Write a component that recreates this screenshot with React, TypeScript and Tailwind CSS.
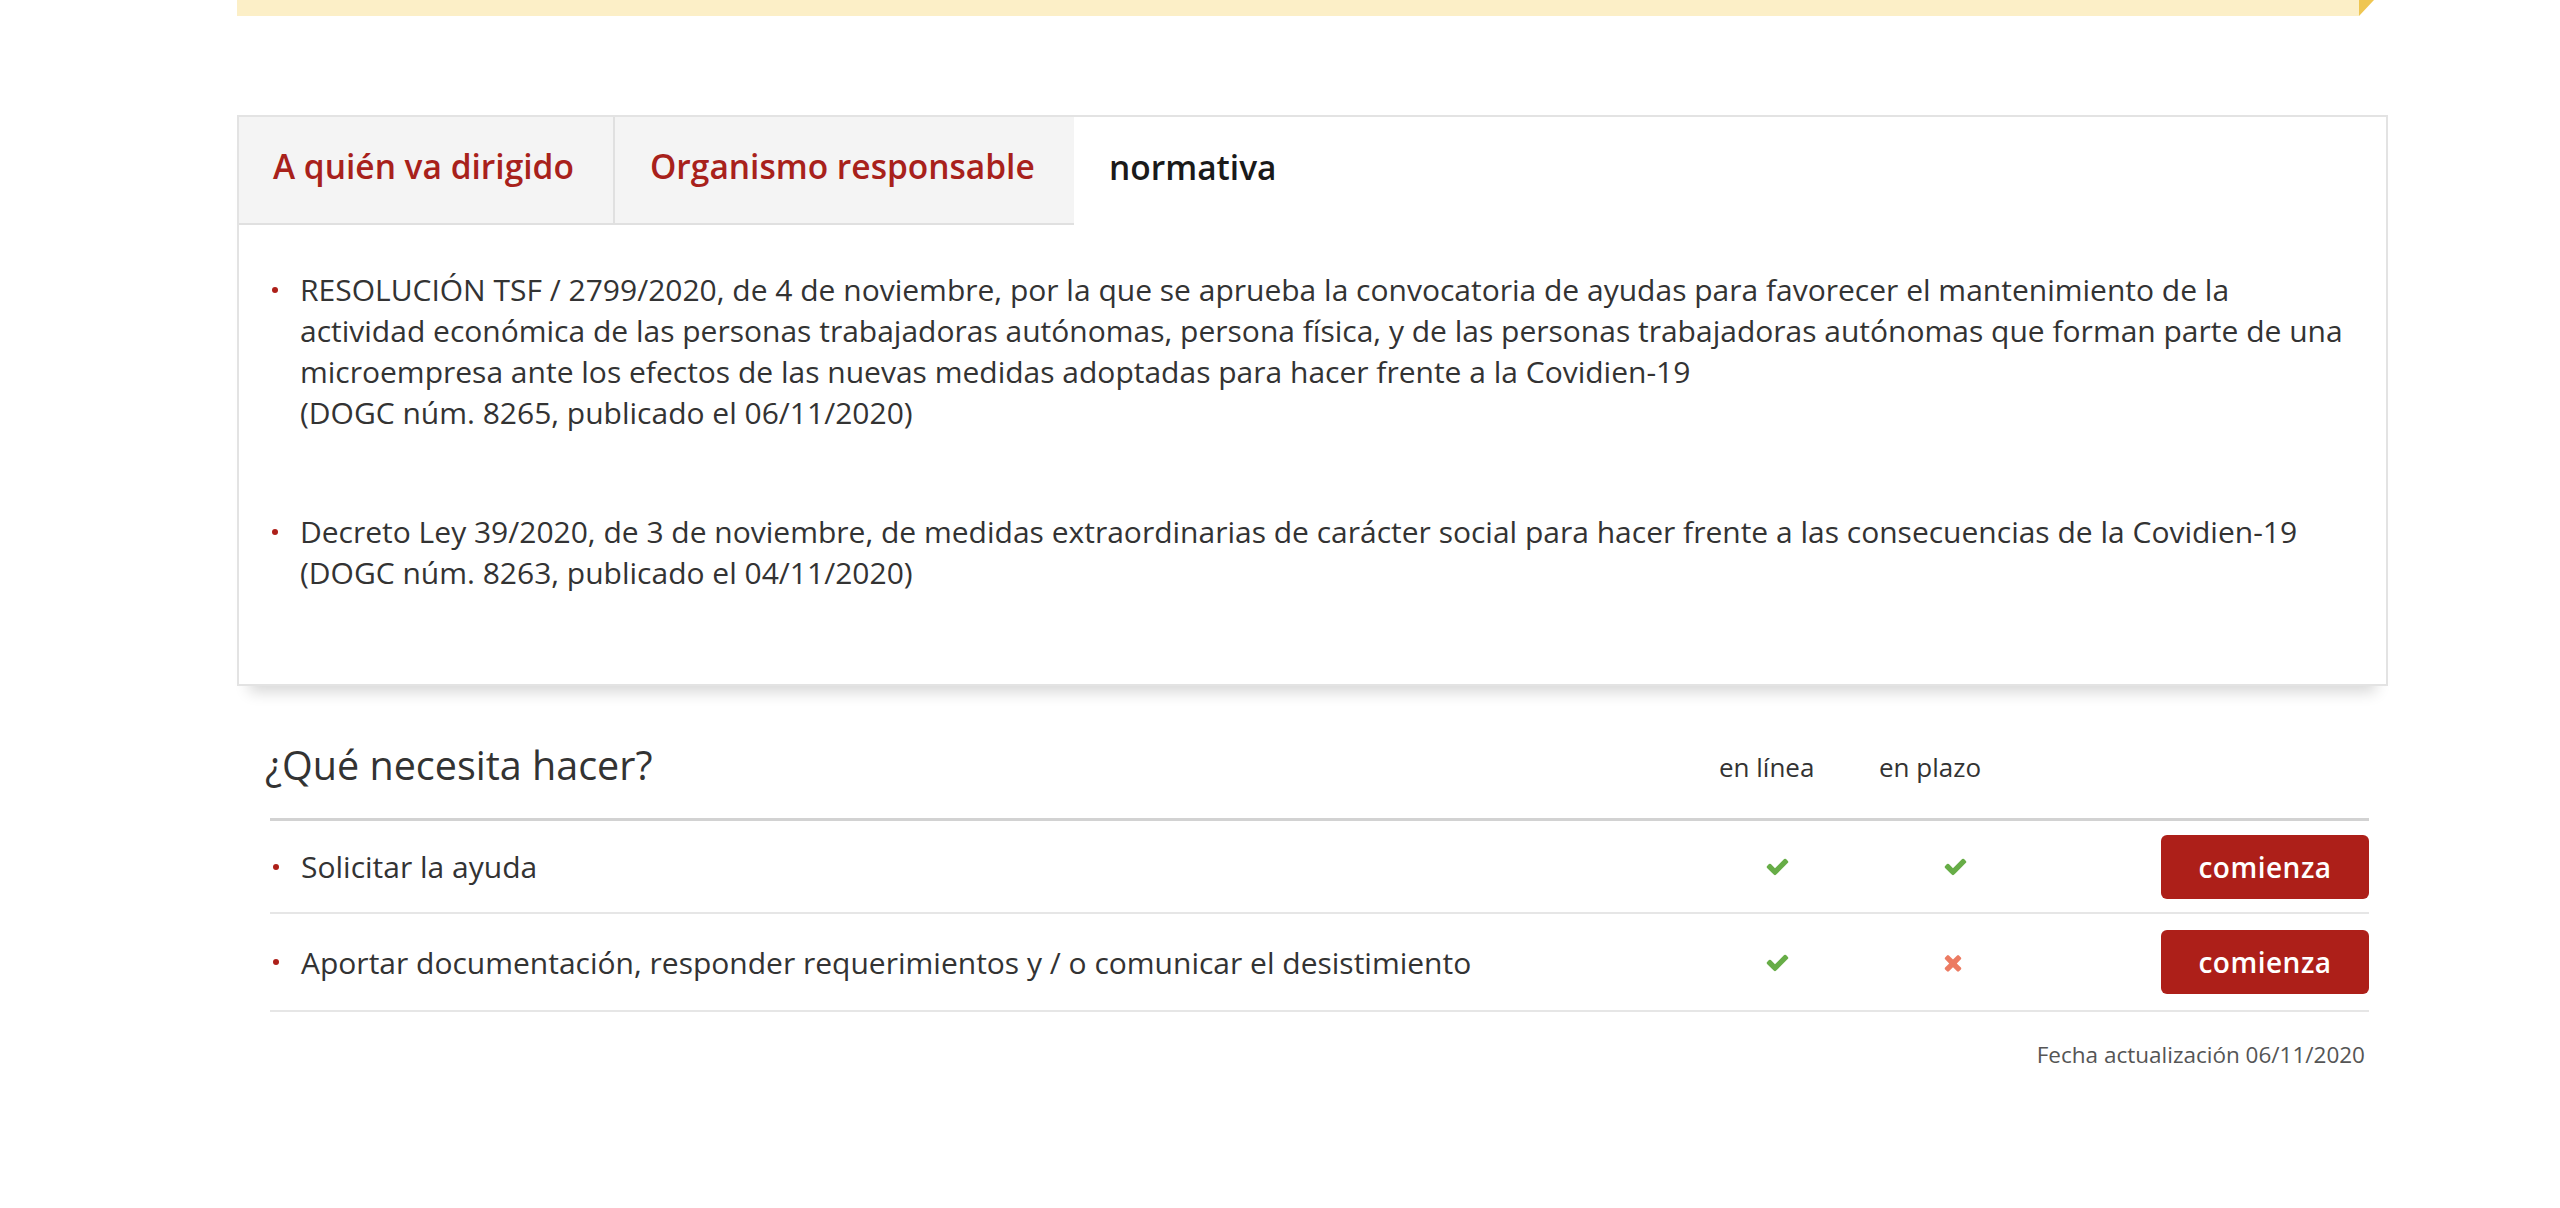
import React from 'react'

const TABS = [
  { label: 'A quién va dirigido', width: 'w-[374px] pl-[34px]', active: false, first: true },
  { label: 'Organismo responsable', width: 'w-[461px] pl-[35px]', active: false, first: false },
  { label: 'normativa', width: 'pl-[35px]', active: true, first: false },
]

const ROWS = [
  { label: 'Solicitar la ayuda', online: true, inTime: true, h: 'h-[93px]' },
  {
    label: 'Aportar documentación, responder requerimientos y / o comunicar el desistimiento',
    online: true,
    inTime: false,
    h: 'h-[98px]',
  },
]

function Check() {
  return (
    <svg viewBox="0 0 1792 1792" className="w-[25px] h-[25px]" aria-hidden>
      <path
        fill="#67ad47"
        d="M1671 566q0 40-28 68l-724 724-136 136q-28 28-68 28t-68-28l-136-136-362-362q-28-28-28-68t28-68l136-136q28-28 68-28t68 28l294 295 656-657q28-28 68-28t68 28l136 136q28 28 28 68z"
      />
    </svg>
  )
}

function Cross() {
  return (
    <svg viewBox="0 0 1408 1792" className="w-[20px] h-[25px]" aria-hidden>
      <path
        fill="#ec7b62"
        d="M1298 1322q0 40-28 68l-136 136q-28 28-68 28t-68-28l-294-294-294 294q-28 28-68 28t-68-28l-136-136q-28-28-28-68t28-68l294-294-294-294q-28-28-28-68t28-68l136-136q28-28 68-28t68 28l294 294 294-294q28-28 68-28t68 28l136 136q28 28 28 68t-28 68l-294 294 294 294q28 28 28 68z"
      />
    </svg>
  )
}

function Bullet() {
  return (
    <span className="w-[28px] h-[41px] shrink-0 flex items-center">
      <span className="w-[6px] h-[6px] rounded-full bg-[#ad1f19]" />
    </span>
  )
}

export default function App() {
  return (
    <div className="min-h-screen bg-white font-['Open_Sans',sans-serif] text-[#333]">
      <div className="ml-[237px] w-[2151px]">
        {/* Notice bar (bottom edge only) */}
        <div className="flex h-4 w-[2137px]">
          <div className="flex-1 bg-[#fcefc7]" />
          <svg width="15" height="16" viewBox="0 0 15 16" aria-hidden>
            <polygon points="0,0 15,0 0,16" fill="#efc652" />
          </svg>
        </div>

        {/* Tabs box */}
        <section className="mt-[99px] border-2 border-[#e3e3e3] shadow-[0_18px_14px_-12px_rgba(0,0,0,0.16)]">
          <div className="flex h-[108px]">
            {TABS.map(tab => (
              <div
                key={tab.label}
                className={`flex items-center pb-[7px] text-[33.5px] font-semibold ${tab.width} ${
                  tab.active
                    ? 'text-[#1a1a1a] bg-white'
                    : `bg-[#f4f4f4] text-[#a8211b] border-b-2 border-[#e0e0e0] ${tab.first ? '' : 'border-l-2'}`
                }`}
              >
                {tab.label}
              </div>
            ))}
          </div>

          <ul className="pl-[33px] pr-[30px] pt-[44px] pb-[91px] text-[30px] leading-[41px]">
            <li className="flex">
              <Bullet />
              <p>
                RESOLUCIÓN TSF / 2799/2020, de 4 de noviembre, por la que se aprueba la convocatoria de ayudas para
                favorecer el mantenimiento de la actividad económica de las personas trabajadoras autónomas, persona
                física, y de las personas trabajadoras autónomas que forman parte de una microempresa ante los efectos
                de las nuevas medidas adoptadas para hacer frente a la Covidien-19
                <br />
                (DOGC núm. 8265, publicado el 06/11/2020)
              </p>
            </li>
            <li className="flex mt-[78px]">
              <Bullet />
              <p>
                Decreto Ley 39/2020, de 3 de noviembre, de medidas extraordinarias de carácter social para hacer frente
                a las consecuencias de la Covidien-19
                <br />
                (DOGC núm. 8263, publicado el 04/11/2020)
              </p>
            </li>
          </ul>
        </section>

        {/* What do you need to do */}
        <div className="mt-[30px] ml-[33px] mr-[19px]">
          <div className="flex items-center h-[105px] border-b-[3px] border-[#d2d2d2]">
            <h2 className="flex-1 -ml-[5px] pb-[2px] text-[39.5px] text-[#333] font-normal">¿Qué necesita hacer?</h2>
            <div className="w-[160px] text-[26px]">en línea</div>
            <div className="w-[282px] text-[26px]">en plazo</div>
            <div className="w-[208px]" />
          </div>

          {ROWS.map(row => (
            <div key={row.label} className={`flex items-center ${row.h} border-b-2 border-[#e6e6e6]`}>
              <div className="flex-1 flex items-center text-[30px] pl-[3px]">
                <Bullet />
                <span>{row.label}</span>
              </div>
              <div className="w-[160px] pl-[46px] flex">{row.online ? <Check /> : <Cross />}</div>
              <div className="w-[282px] pl-[64px] flex">{row.inTime ? <Check /> : <Cross />}</div>
              <button className="w-[208px] h-[64px] rounded-[6px] bg-[#ad1f19] text-white text-[28px] font-semibold tracking-[0.5px]">
                comienza
              </button>
            </div>
          ))}

          <div className="mt-[29px] pr-[4px] text-right text-[22.5px] leading-[28px] text-[#555]">
            Fecha actualización 06/11/2020
          </div>
        </div>
      </div>
    </div>
  )
}
